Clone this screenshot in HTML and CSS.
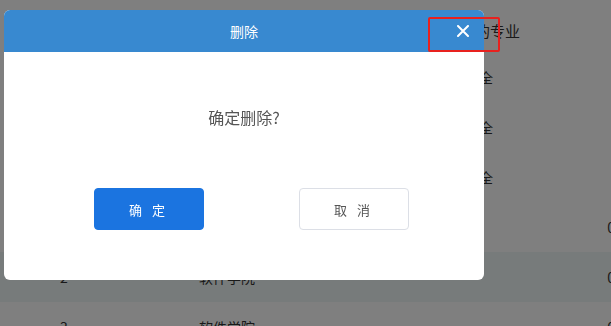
FILE: index.html
```html
<!doctype html>
<html lang="zh-CN">
  <head>
    <meta charset="UTF-8" />
    <meta name="viewport" content="width=device-width, initial-scale=1.0" />
    <title>删除</title>
    <link rel="stylesheet" href="styles.css">
  </head>
  <body>
    <div class="table">
      <div class="row head">
        <span class="c1">序号</span>
        <span class="c2">学院</span>
        <span class="c3">的专业</span>
        <span class="c4"></span>
      </div>
      <div class="row"><span class="c1">1</span><span class="c2">软件学院</span><span class="c3">全</span><span class="c4"></span></div>
      <div class="row"><span class="c1">1</span><span class="c2">软件学院</span><span class="c3">全</span><span class="c4"></span></div>
      <div class="row"><span class="c1">1</span><span class="c2">软件学院</span><span class="c3">全</span><span class="c4"></span></div>
      <div class="row"><span class="c1">1</span><span class="c2">软件学院</span><span class="c3"></span><span class="c4">0</span></div>
      <div class="row hover"><span class="c1">2</span><span class="c2">软件学院</span><span class="c3"></span><span class="c4">0</span></div>
      <div class="row"><span class="c1">3</span><span class="c2">软件学院</span><span class="c3"></span><span class="c4">0</span></div>
    </div>

    <div class="mask"></div>

    <div class="dialog">
      <div class="dialog-head">
        <span class="dialog-title">删除</span>
        <button class="dialog-close" aria-label="关闭">
          <svg width="12" height="12" viewBox="0 0 12 12">
            <path d="M1 1 L11 11 M11 1 L1 11" stroke="#fff" stroke-width="2" stroke-linecap="round" />
          </svg>
        </button>
      </div>
      <div class="dialog-body">确定删除?</div>
      <div class="dialog-foot">
        <button class="btn btn-primary">确定</button>
        <button class="btn btn-default">取消</button>
      </div>
    </div>

    <div class="mark"></div>
  </body>
</html>
```

FILE: styles.css
```css
body {
  margin: 0;
  background: #fff;
  font-family: "Noto Sans CJK SC", "Noto Sans", sans-serif;
  overflow: hidden;
}

/* background table */
.table {
  padding-top: 8px;
  height: 326px;
  box-sizing: border-box;
  overflow: hidden;
}
.row {
  display: grid;
  grid-template-columns: 139px 240px 54px 1fr;
  padding-left: 60px;
  height: 50px;
  align-items: center;
  font-size: 14px;
  color: #333;
}
.row.head {
  height: 44px;
  font-size: 15px;
}
.row.hover {
  background: #eef6f6;
}
.c3 {
  justify-self: end;
}
.row.head .c3 {
  margin-right: -27px;
}
.c4 {
  text-align: right;
  margin-right: -4px;
}

/* overlay */
.mask {
  position: fixed;
  inset: 0;
  background: rgba(0, 0, 0, 0.5);
}

.dialog {
  position: fixed;
  left: 4px;
  top: 10px;
  width: 480px;
  height: 270px;
  background: #fff;
  border-radius: 6px;
  overflow: hidden;
  display: flex;
  flex-direction: column;
}
.dialog-head {
  height: 42px;
  background: #3889d0;
  display: flex;
  align-items: center;
  justify-content: center;
  position: relative;
}
.dialog-title {
  color: #fff;
  font-size: 14px;
}
.dialog-close {
  position: absolute;
  right: 15px;
  top: 15px;
  width: 12px;
  height: 12px;
  padding: 0;
  border: 0;
  background: none;
  display: flex;
}
.dialog-body {
  height: 136px;
  padding-bottom: 6px;
  box-sizing: border-box;
  display: flex;
  align-items: center;
  justify-content: center;
  font-size: 16px;
  color: #555;
}
.dialog-foot {
  display: flex;
  gap: 95px;
  padding-left: 90px;
}
.btn {
  width: 110px;
  height: 42px;
  border-radius: 4px;
  font-family: inherit;
  font-size: 13px;
  letter-spacing: 10px;
  padding: 0 0 0 6px;
}
.btn-primary {
  background: #1b74e0;
  border: 1px solid #1b74e0;
  color: #fff;
}
.btn-default {
  background: #fff;
  border: 1px solid #dcdfe6;
  color: #555;
}

/* red annotation box */
.mark {
  position: fixed;
  left: 428px;
  top: 17px;
  width: 68px;
  height: 31px;
  border: 2px solid #e8211e;
  border-radius: 2px;
}
```
